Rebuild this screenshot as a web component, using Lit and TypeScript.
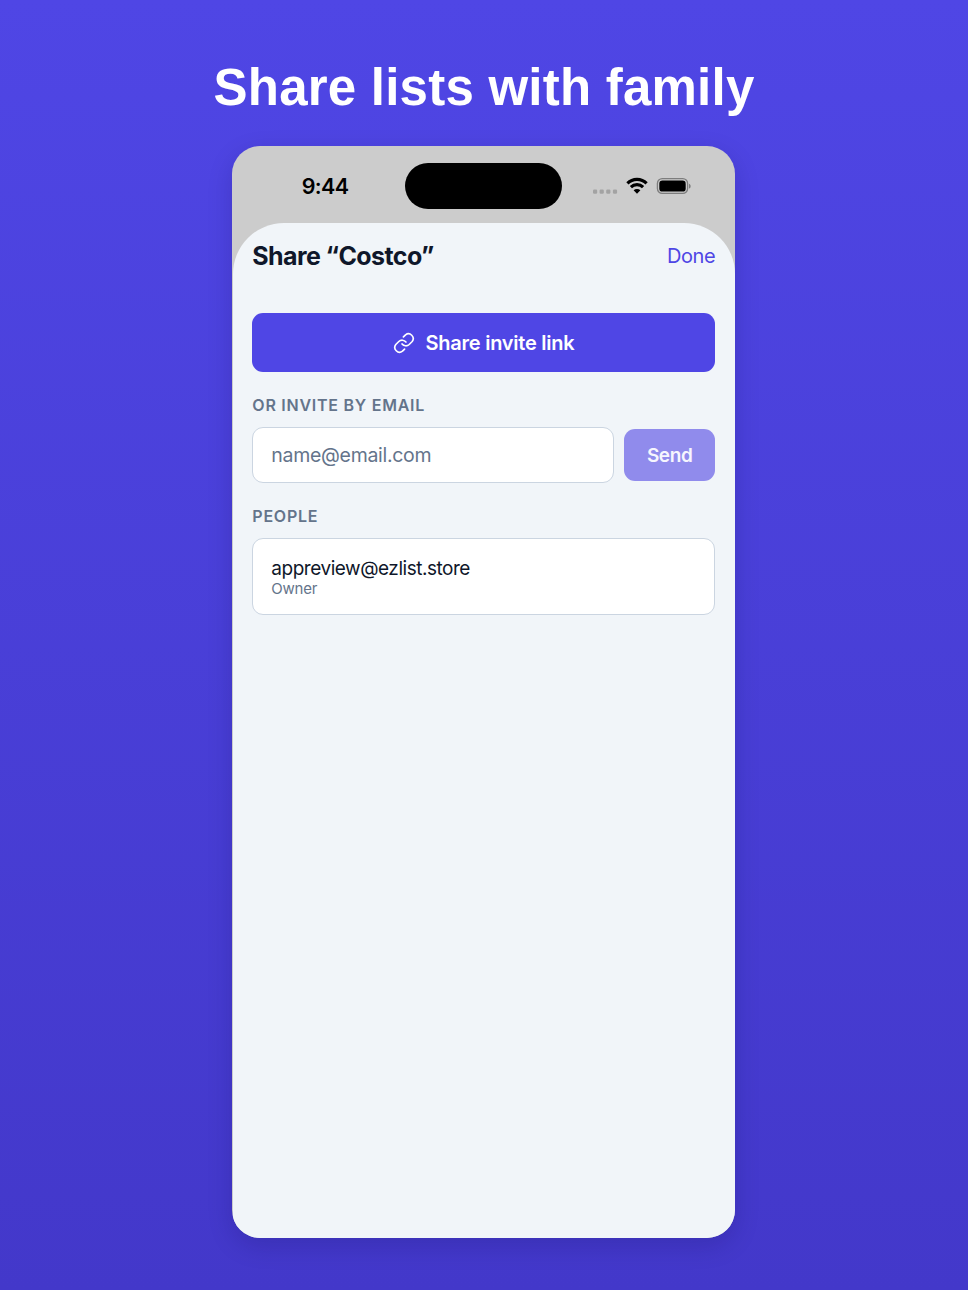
import { LitElement, html, css } from "lit";
import { customElement } from "lit/decorators.js";

@customElement("status-bar")
class StatusBar extends LitElement {
  static styles = css`
    :host {
      display: flex;
      box-sizing: border-box;
      height: 77px;
      padding-top: 17px;
      align-items: flex-start;
      color: #000;
    }
    .side {
      flex: none;
      box-sizing: border-box;
      width: 173px;
      height: 46px;
      display: flex;
      align-items: center;
    }
    .time {
      padding-left: 69.4px;
      font-size: 21.5px;
      font-weight: 600;
      letter-spacing: -0.6px;
    }
    .island {
      width: 157px;
      height: 46px;
      border-radius: 24px;
      background: #000;
    }
    .status {
      padding-left: 30px;
    }
    svg {
      display: block;
    }
  `;
  render() {
    return html`
      <div class="side"><span class="time">9:44</span></div>
      <div class="island"></div>
      <div class="side status">
        <svg width="100" height="20" viewBox="0 0 100 20">
          <g fill="#a3a3a3">
            <rect x="1" y="13.6" width="4.2" height="4.2" rx="1.2" />
            <rect x="7.6" y="13.6" width="4.2" height="4.2" rx="1.2" />
            <rect x="14.2" y="13.6" width="4.2" height="4.2" rx="1.2" />
            <rect x="20.9" y="13.6" width="4.2" height="4.2" rx="1.2" />
          </g>
          <g fill="none" stroke="#000" stroke-width="3.1">
            <path d="M35.4 7.4A13.4 13.4 0 0 1 54.6 7.4" />
            <path d="M38.9 11.2A8.6 8.6 0 0 1 51.1 11.2" />
          </g>
          <path d="M45 17.8L41.6 14.3A4.9 4.9 0 0 1 48.4 14.3Z" />
          <rect x="65.4" y="2.6" width="30.2" height="14.8" rx="4.8" fill="none" stroke="#7d7d7d" stroke-width="1.3" />
          <rect x="67.3" y="4.5" width="26.4" height="11.1" rx="3.2" />
          <path d="M97 7.7C99.2 8.5 99.2 11.8 97 12.6Z" fill="#7d7d7d" />
        </svg>
      </div>
    `;
  }
}

@customElement("app-root")
class AppRoot extends LitElement {
  static styles = css`
    :host {
      display: flex;
      flex-direction: column;
      align-items: center;
      box-sizing: border-box;
      height: 1290px;
      overflow: hidden;
      background: linear-gradient(180deg, #4f46e5, #4338ca);
      font-family: Inter, "Liberation Sans", sans-serif;
      color: #0f172a;
    }
    h1,
    h2,
    h3 {
      margin: 0;
    }
    .headline {
      margin-top: 58px;
      height: 59px;
      line-height: 60px;
      font-family: "Liberation Sans", Arial, sans-serif;
      font-size: 51px;
      font-weight: 700;
      letter-spacing: 0.23px;
      color: #fff;
      white-space: nowrap;
    }
    .phone {
      margin-top: 28.7px;
      margin-right: 0.5px;
      width: 503px;
      height: 1092.5px;
      border-radius: 28px;
      overflow: hidden;
      background: #ccc;
      box-shadow: 0 8px 24px rgba(15, 10, 80, 0.18);
    }
    .sheet {
      box-sizing: border-box;
      height: 1016px;
      margin: 0 0.6px;
      padding: 0 19.5px;
      border-radius: 51px 51px 0 0;
      background: #f1f5f9;
    }
    .head {
      display: flex;
      align-items: center;
      justify-content: space-between;
      height: 66px;
    }
    .title {
      font-size: 25px;
      font-weight: 700;
      letter-spacing: -0.6px;
    }
    .done {
      font-size: 20px;
      letter-spacing: -0.45px;
      color: #4f46e5;
    }
    .share {
      display: flex;
      align-items: center;
      justify-content: center;
      gap: 10.5px;
      margin-top: 24px;
      height: 59px;
      border-radius: 11px;
      background: #4f46e5;
      color: #fff;
      font-size: 20px;
      font-weight: 600;
      letter-spacing: -0.24px;
    }
    .share span,
    .share svg {
      padding-top: 1px;
    }
    .label {
      height: 20px;
      line-height: 20px;
      font-size: 16px;
      font-weight: 600;
      letter-spacing: 0.75px;
      color: #64748b;
    }
    .by-email {
      margin-top: 23px;
    }
    .row {
      display: flex;
      align-items: center;
      gap: 10px;
      margin-top: 12px;
    }
    .field {
      flex: 1;
      box-sizing: border-box;
      height: 56px;
      line-height: 54px;
      padding: 0 18px;
      border: 1px solid #cbd5e1;
      border-radius: 11px;
      background: #fff;
      font-size: 19.5px;
      letter-spacing: -0.3px;
      color: #64748b;
    }
    .send {
      width: 91px;
      height: 52px;
      line-height: 53px;
      border-radius: 11px;
      background: #908bec;
      color: #f6f6fe;
      text-align: center;
      font-size: 19px;
      font-weight: 600;
      letter-spacing: -0.4px;
    }
    .people {
      margin-top: 23px;
    }
    .card {
      box-sizing: border-box;
      margin-top: 12px;
      height: 77.8px;
      padding: 19px 18px 0;
      border: 1px solid #cbd5e1;
      border-radius: 11px;
      background: #fff;
    }
    .mail {
      height: 21px;
      line-height: 22px;
      font-size: 19px;
      letter-spacing: -0.47px;
    }
    .role {
      height: 19px;
      line-height: 19px;
      font-size: 15px;
      letter-spacing: -0.25px;
      color: #64748b;
    }
  `;
  render() {
    return html`
      <h1 class="headline">Share lists with family</h1>
      <div class="phone">
        <status-bar></status-bar>
        <div class="sheet">
          <div class="head">
            <h2 class="title">Share “Costco”</h2>
            <span class="done">Done</span>
          </div>
          <div class="share">
            <svg width="22" height="22" viewBox="0 0 24 24" fill="none" stroke="#fff" stroke-width="1.8" stroke-linecap="round" stroke-linejoin="round">
              <path d="M9.9 13a5.2 5.2 0 0 0 7.74.64l3.3-3.3a5.2 5.2 0 0 0-7.27-7.27l-2.3 2.3" />
              <path d="M14.1 11a5.2 5.2 0 0 0-7.74-.64l-3.3 3.3a5.2 5.2 0 0 0 7.27 7.27l2.3-2.3" />
            </svg>
            <span>Share invite link</span>
          </div>
          <h3 class="label by-email">OR INVITE BY EMAIL</h3>
          <div class="row">
            <div class="field">name@email.com</div>
            <div class="send">Send</div>
          </div>
          <h3 class="label people">PEOPLE</h3>
          <div class="card">
            <div class="mail">appreview@ezlist.store</div>
            <div class="role">Owner</div>
          </div>
        </div>
      </div>
    `;
  }
}
